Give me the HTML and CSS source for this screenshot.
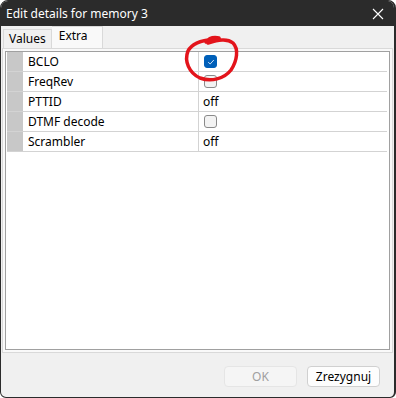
FILE: index.html
```html
<!DOCTYPE html>
<html lang="pl">
<head>
    <meta charset="UTF-8">
    <title>Edit details for memory 3</title>
    <link rel="stylesheet" href="styles.css">
</head>
<body>
    <div class="window">
        <!-- Pasek tytułu -->
        <div class="titlebar">
            <span class="title">Edit details for memory 3</span>
            <svg class="close" width="12" height="12" viewBox="0 0 12 12">
                <path d="M1 1 L11 11 M11 1 L1 11" stroke="#ffffff" stroke-width="1.1" fill="none"/>
            </svg>
        </div>

        <div class="content">
            <!-- Zakładki -->
            <div class="tabs">
                <div class="tab">Values</div>
                <div class="tab active">Extra</div>
            </div>

            <div class="panel">
                <div class="grid">
                    <div class="row">
                        <div class="rowhead"></div>
                        <div class="name">BCLO</div>
                        <div class="value"><span class="check checked">
                            <svg width="8" height="8" viewBox="0 0 8 8"><path d="M1.2 4.2 L3.2 6 L6.8 2" stroke="#cfe2f7" stroke-width="1" fill="none"/></svg>
                        </span></div>
                    </div>
                    <div class="row">
                        <div class="rowhead"></div>
                        <div class="name">FreqRev</div>
                        <div class="value"><span class="check"></span></div>
                    </div>
                    <div class="row">
                        <div class="rowhead"></div>
                        <div class="name">PTTID</div>
                        <div class="value">off</div>
                    </div>
                    <div class="row">
                        <div class="rowhead"></div>
                        <div class="name">DTMF decode</div>
                        <div class="value"><span class="check"></span></div>
                    </div>
                    <div class="row">
                        <div class="rowhead"></div>
                        <div class="name">Scrambler</div>
                        <div class="value">off</div>
                    </div>
                </div>
            </div>

            <!-- Przyciski -->
            <div class="buttons">
                <button class="btn" disabled>OK</button>
                <button class="btn">Zrezygnuj</button>
            </div>
        </div>

        <!-- Czerwone kółko (adnotacja) -->
        <svg class="mark" width="396" height="398" viewBox="0 0 396 398">
            <path d="M214 39 C204 40, 192 43, 188 51 C184 61, 189 73, 200 78 C211 82, 224 79, 231 70 C237 61, 239 49, 233 43 C227 38, 218 40, 208 43 M206 42 C209 38, 214 37, 219 38"
                  stroke="#e3141b" stroke-width="3.5" fill="none" stroke-linecap="round" stroke-linejoin="round"/>
        </svg>
    </div>
</body>
</html>
```

FILE: styles.css
```css
body {
    margin: 0;
    background: #ffffff;
    font-family: "Segoe UI", "Noto Sans", "Open Sans", sans-serif;
    font-size: 12px;
}

.window {
    position: relative;
    width: 393px;
    height: 396px;
    border: 1px solid #2b2b2b;
    border-right-width: 2px;
    border-radius: 8px 8px 6px 6px;
    background: #f0f0f0;
    display: flex;
    flex-direction: column;
    overflow: hidden;
}

.titlebar {
    height: 25px;
    background: #2b2b2b;
    color: #ffffff;
    display: flex;
    align-items: center;
    justify-content: space-between;
    padding: 0 10px 0 5px;
    flex-shrink: 0;
}

.title {
    font-size: 12px;
    margin-top: -1px;
}

.content {
    flex: 1;
    display: flex;
    flex-direction: column;
    padding: 0 0 0 1px;
}

.tabs {
    display: flex;
    height: 22px;
    align-items: flex-end;
    padding-left: 1px;
}

.tab {
    height: 18px;
    line-height: 18px;
    padding: 0 5px;
    border: 1px solid #d9d9d9;
    border-bottom: none;
    background: #f0f0f0;
    color: #000;
}

.tab.active {
    height: 21px;
    line-height: 17px;
    padding: 0 7px;
    background: #f9f9f9;
    border-left: none;
    width: 36px;
}

.panel {
    width: 385px;
    height: 299px;
    border: 1px solid #d9d9d9;
    background: #f9f9f9;
    padding: 2px;
}

.grid {
    height: 297px;
    border: 1px solid #a0a0a0;
    background: #ffffff;
    padding: 0 2px 0 1px;
}

.row {
    display: flex;
    height: 19px;
    border-bottom: 1px solid #d3d3d3;
    line-height: 19px;
}

.rowhead {
    width: 16px;
    background: #c8c8c8;
    flex-shrink: 0;
}

.name {
    width: 170px;
    padding-left: 5px;
    border-right: 1px solid #d3d3d3;
}

.value {
    flex: 1;
    padding-left: 4px;
    display: flex;
    align-items: center;
}

.check {
    width: 11px;
    height: 11px;
    margin-left: 1px;
    border: 1px solid #8a8a8a;
    border-radius: 3px;
    background: #f3f3f3;
    display: flex;
    align-items: center;
    justify-content: center;
}

.check.checked {
    background: #005fb8;
    border-color: #005fb8;
}

.buttons {
    display: flex;
    justify-content: flex-end;
    gap: 10px;
    padding: 13px 14px 0 0;
}

.btn {
    height: 21px;
    font-family: inherit;
    font-size: 12px;
    border: 1px solid #d0d0d0;
    border-radius: 4px;
    background: #fdfdfd;
    color: #000;
    padding: 0;
    width: 73px;
}

.btn:disabled {
    background: #f5f5f5;
    border-color: #e5e5e5;
    color: #a0a0a0;
}

.mark {
    position: absolute;
    left: -1px;
    top: -1px;
    pointer-events: none;
}
```
